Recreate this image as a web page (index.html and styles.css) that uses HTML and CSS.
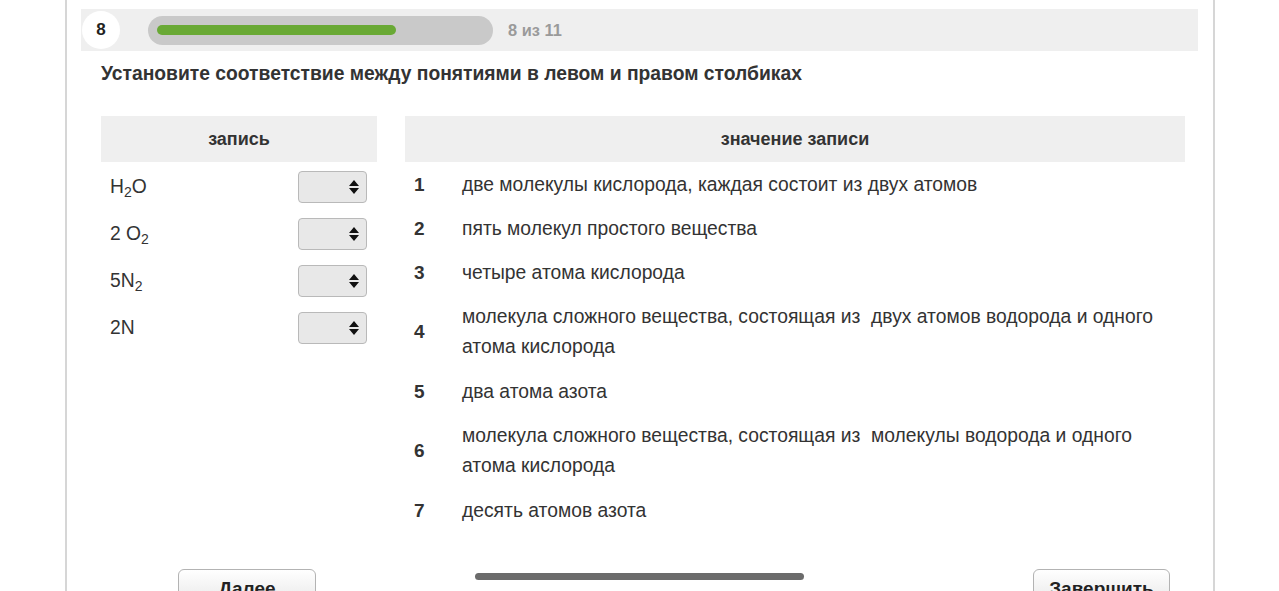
FILE: index.html
```html
<!DOCTYPE html>
<html lang="ru">
<head>
    <meta charset="UTF-8">
    <meta name="viewport" content="width=device-width, initial-scale=1.0">
    <title>Тест</title>
    <link rel="stylesheet" href="styles.css">
</head>
<body>
    <div class="panel">
        <div class="progress-head">
            <div class="q-num">8</div>
            <div class="progress">
                <div class="progress-fill" style="width: 239px"></div>
            </div>
            <div class="progress-text">8 из 11</div>
        </div>

        <h2 class="task">Установите соответствие между понятиями в левом и правом столбиках</h2>

        <div class="match">
            <div class="col-left">
                <div class="col-head">запись</div>
                <div class="left-row">
                    <span>H<sub>2</sub>O</span>
                    <div class="select"><svg width="10" height="14" viewBox="0 0 10 14"><path d="M5 0 L10 6 H0 Z M0 8 H10 L5 14 Z" fill="#111"/></svg></div>
                </div>
                <div class="left-row">
                    <span>2 O<sub>2</sub></span>
                    <div class="select"><svg width="10" height="14" viewBox="0 0 10 14"><path d="M5 0 L10 6 H0 Z M0 8 H10 L5 14 Z" fill="#111"/></svg></div>
                </div>
                <div class="left-row">
                    <span>5N<sub>2</sub></span>
                    <div class="select"><svg width="10" height="14" viewBox="0 0 10 14"><path d="M5 0 L10 6 H0 Z M0 8 H10 L5 14 Z" fill="#111"/></svg></div>
                </div>
                <div class="left-row">
                    <span>2N</span>
                    <div class="select"><svg width="10" height="14" viewBox="0 0 10 14"><path d="M5 0 L10 6 H0 Z M0 8 H10 L5 14 Z" fill="#111"/></svg></div>
                </div>
            </div>

            <div class="col-right">
                <div class="col-head">значение записи</div>
                <div class="right-row"><b>1</b><span>две молекулы кислорода, каждая состоит из двух атомов</span></div>
                <div class="right-row"><b>2</b><span>пять молекул простого вещества</span></div>
                <div class="right-row"><b>3</b><span>четыре атома кислорода</span></div>
                <div class="right-row tall"><b>4</b><span>молекула сложного вещества, состоящая из &nbsp;двух атомов водорода и одного атома кислорода</span></div>
                <div class="right-row"><b>5</b><span>два атома азота</span></div>
                <div class="right-row tall"><b>6</b><span>молекула сложного вещества, состоящая из &nbsp;молекулы водорода и одного атома кислорода</span></div>
                <div class="right-row"><b>7</b><span>десять атомов азота</span></div>
            </div>
        </div>

        <div class="footer">
            <button class="btn">Далее</button>
            <div class="scroll-thumb"></div>
            <button class="btn btn-end">Завершить</button>
        </div>
    </div>
</body>
</html>
```

FILE: styles.css
```css
body {
    font-family: "Liberation Sans", Arial, Helvetica, sans-serif;
    background-color: #fff;
    color: #333;
    margin: 0;
    padding: 0;
    overflow: hidden;
}

.panel {
    width: 1117px;
    margin-left: 65px;
    padding: 9px 15px 0 14px;
    border-left: 2px solid #d6d6d6;
    border-right: 2px solid #d6d6d6;
    height: 640px;
}

.progress-head {
    display: flex;
    align-items: center;
    height: 42px;
    background-color: #efefef;
    padding-left: 1px;
}

.q-num {
    width: 38px;
    height: 38px;
    border-radius: 50%;
    background-color: #fff;
    display: flex;
    align-items: center;
    justify-content: center;
    font-weight: bold;
    font-size: 17px;
    color: #222;
}

.progress {
    width: 345px;
    height: 29px;
    margin-left: 28px;
    border-radius: 15px;
    background-color: #c9c9c9;
    display: flex;
    align-items: center;
    padding-left: 9px;
    box-sizing: border-box;
}

.progress-fill {
    height: 10px;
    border-radius: 5px;
    background-color: #69a935;
}

.progress-text {
    margin-left: 15px;
    color: #9a9a9a;
    font-weight: bold;
    font-size: 16.4px;
}

.task {
    margin: 12px 0 0 20px;
    font-size: 19.3px;
    line-height: 22px;
    color: #333;
}

.match {
    display: grid;
    grid-template-columns: 276px 780px;
    column-gap: 28px;
    margin: 31px 0 0 20px;
}

.col-head {
    height: 46px;
    margin-bottom: 1px;
    background-color: #efefef;
    display: flex;
    align-items: center;
    justify-content: center;
    font-weight: bold;
    font-size: 18px;
    color: #333;
}

.left-row {
    height: 47px;
    display: flex;
    align-items: center;
    justify-content: space-between;
    padding: 0 10px 0 9px;
    font-size: 19.3px;
    color: #333;
}

.left-row sub {
    font-size: 14px;
    vertical-align: -4px;
    line-height: 0;
}

.select {
    width: 60px;
    height: 30px;
    border: 1px solid #b9b9b9;
    border-radius: 4px;
    background-color: #e8e8e8;
    display: flex;
    align-items: center;
    justify-content: flex-end;
    padding-right: 7px;
}

.right-row {
    display: flex;
    align-items: center;
    padding: 7px 0;
    font-size: 19.3px;
    line-height: 30px;
}

.right-row.tall {
    padding-bottom: 8px;
}

.right-row b {
    width: 48px;
    flex: none;
    padding-left: 9px;
    font-size: 19px;
    color: #333;
}

.right-row span {
    padding-right: 20px;
}

.footer {
    display: flex;
    align-items: flex-start;
    margin-top: 36px;
    padding-left: 97px;
}

.btn {
    width: 138px;
    height: 42px;
    border: 1px solid #b3b3b3;
    border-radius: 6px;
    background: linear-gradient(#ffffff, #e4e4e4);
    font-family: "Liberation Sans", Arial, sans-serif;
    font-weight: bold;
    font-size: 19px;
    color: #222;
    padding: 0 0 2px;
}

.scroll-thumb {
    width: 329px;
    height: 7px;
    margin: 4px 0 0 159px;
    border-radius: 4px;
    background-color: #6b6b6b;
}

.btn-end {
    margin-left: auto;
    margin-right: 28px;
    width: 137px;
}
```
